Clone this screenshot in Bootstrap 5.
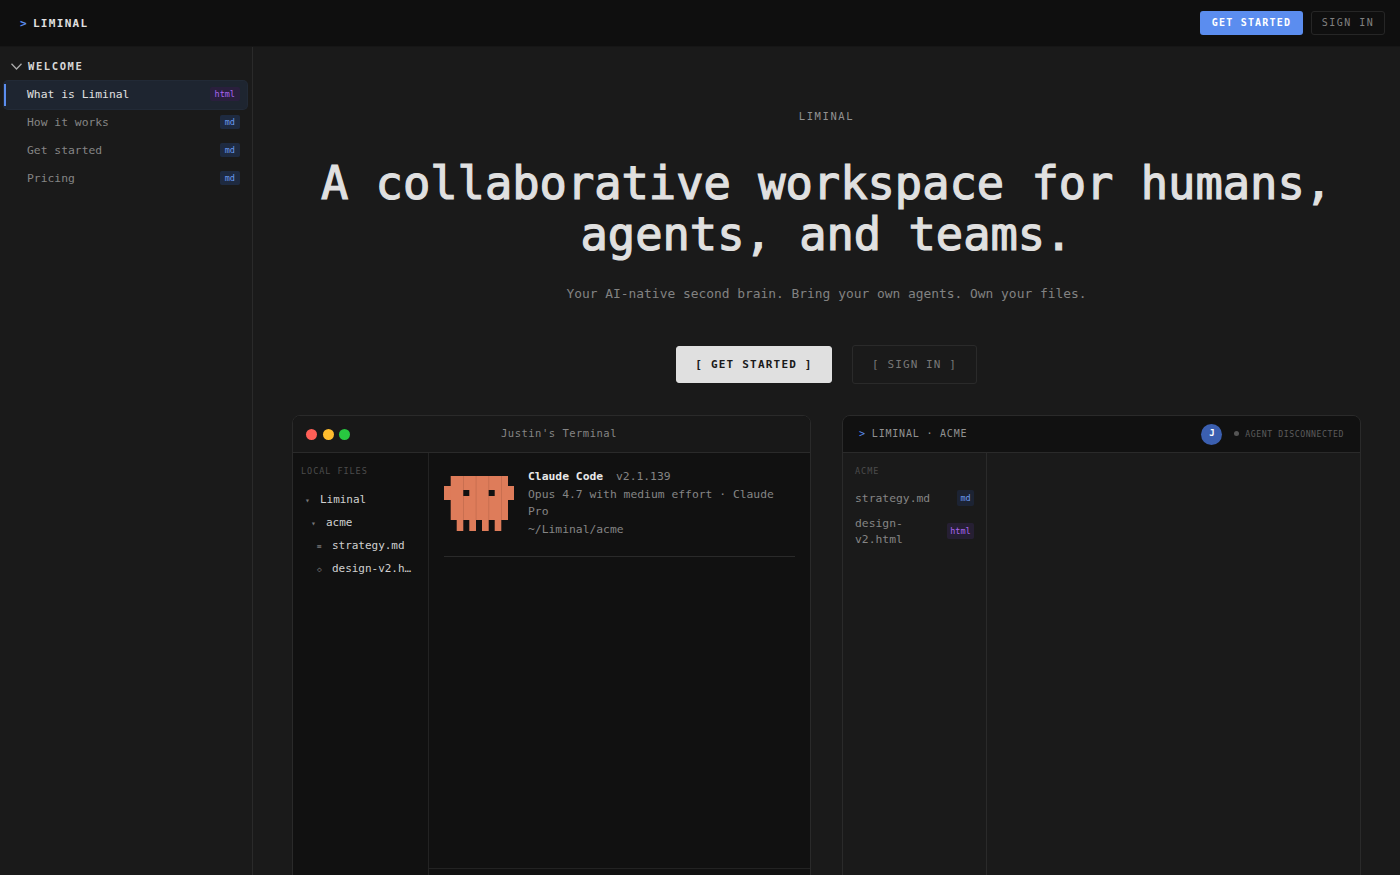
<!doctype html>
<html lang="en" data-bs-theme="dark">
<head>
<meta charset="utf-8">
<title>Liminal</title>
<link href="https://cdn.jsdelivr.net/npm/bootstrap@5.3.0/dist/css/bootstrap.min.css" rel="stylesheet">
<style>
html,body{height:875px;overflow:hidden}
body{background:#1a1a1a;color:#e0e0e0;font-family:"DejaVu Sans Mono","Liberation Mono",monospace;font-size:12px}
.topstrip{height:47px;background:#0f0f0f;padding:0 15px 0 20px;border-bottom:1px solid #161616}
.brandmark{font-size:11px;font-weight:700;letter-spacing:1.3px;color:#e0e0e0;margin-top:2px}
.brandmark .chev{margin-right:5px}
.chev{color:#5b8dee}
.top-cta{height:24px;width:103px;background:#5b8def;border:0;border-radius:3px;color:#fff;font-size:10px;font-weight:700;letter-spacing:1.2px;padding:0 0 1px}
.top-ghost{height:24px;width:74px;background:transparent;border:1px solid #262626;border-radius:3px;color:#808080;font-size:10px;letter-spacing:1.5px;padding:0 0 1px}
.shell{height:828px}
.sidecol{width:253px;flex:none;border-right:1px solid #2a2a2a;background:#1a1a1a;padding:10px 5px 0 4px}
.sec-head{height:19px;padding-left:7px;font-size:10.5px;font-weight:700;letter-spacing:1.6px;color:#d8d8d8;margin-bottom:5px;gap:6px}
.doc-row{height:28px;padding:0 7px 0 23px;font-size:11.35px;color:#858585;position:relative;border-radius:4px}
.doc-row.on{color:#e0e0e0;background:#1e2530;box-shadow:0 0 0 1px #222a36}
.doc-row.on::before{content:"";position:absolute;left:0;top:3px;bottom:3px;width:2px;background:#5b8def}
.ftag{font-size:8.5px;line-height:14px;padding:0 5px;border-radius:2px;margin-bottom:2px}
.ftag-md{background:#1e2a40;color:#6a9af0}
.ftag-html{background:#2a1f3d;color:#a865f0}
.maincol{flex:1;min-width:0;padding:0 39px}
.eyebrow{margin-top:62px;font-size:10.5px;letter-spacing:1.6px;color:#919191;line-height:14px}
.headline{margin:35px 0 0;font-size:45.4px;line-height:51px;font-weight:400;-webkit-text-stroke:1.2px #e0e0e0;color:#e0e0e0;letter-spacing:0;font-family:"DejaVu Sans Mono",monospace}
.subline{margin:24px 0 0;font-size:12.9px;line-height:20px;color:#828282}
.hero-actions{margin-top:41px;gap:20px}
.big-cta{height:37px;width:156px;background:#e0e0e0;color:#1a1a1a;border:1px solid #e0e0e0;border-radius:3px;font-size:11px;font-weight:700;letter-spacing:1.2px;padding:1px 0 0}
.big-ghost{height:39px;width:125px;background:transparent;color:#777;border:1px solid #2a2a2a;border-radius:3px;font-size:11px;letter-spacing:1.1px;padding:1px 0 0}
.win-pair{margin-top:31px;gap:31px;height:500px}
.winbox{flex:1;min-width:0;border:1px solid #2a2a2a;border-radius:8px;overflow:hidden}
.winbox.term{background:#111;flex:0 0 519px}
.winbox.appw{background:#1a1a1a}
.win-top{height:37px;border-bottom:1px solid #2a2a2a;position:relative}
.term .win-top{background:#181818;padding-left:13px;gap:5.5px}
.appw .win-top{background:#111;padding:0 16px 0 16px}
.lightdot{width:11px;height:11px;border-radius:50%}
.win-title{position:absolute;inset:0 0 0 15px;display:flex;align-items:center;justify-content:center;font-size:10.5px;color:#858585;letter-spacing:.5px}
.file-pane{width:136px;flex:none;border-right:1px solid #232323;padding:12px 0 0 8px;overflow:hidden}
.pane-label{font-size:8.5px;letter-spacing:.95px;color:#4c4c4c;line-height:12px;margin-bottom:12px}
.tree-row{height:23px;font-size:11px;color:#d0d0d0;white-space:nowrap}
.tree-ico{font-size:8px;color:#777;width:15px;flex:none}
.tree-name{min-width:0;overflow:hidden;text-overflow:ellipsis;letter-spacing:-.03px}
.term-pane{flex:1;min-width:0;position:relative;padding:15px 15px 0}
.cc-head{padding-bottom:18px;border-bottom:1px solid #2a2a2a;gap:14px}
.squid{margin-top:8px}
.cc-title{font-size:11.35px;font-weight:700;color:#e8e8e8;line-height:17.5px}
.cc-ver{font-weight:400;color:#858585;margin-left:6px}
.cc-line{font-size:11.35px;line-height:17.5px;color:#858585}
.term-foot{position:absolute;left:0;right:0;bottom:0;height:46px;border-top:1px solid #232323}
.avatar-j{width:21px;height:21px;border-radius:50%;background:#3b5fb0;color:#fff;font-size:9px;font-weight:700}
.agent-st{font-size:8.2px;letter-spacing:.55px;color:#5c5c5c;margin-left:12px}
.agent-dot{width:5px;height:5px;border-radius:50%;background:#555;margin-right:6px}
.app-brand{font-size:10px;letter-spacing:.8px;color:#919191;font-weight:500;margin-top:-1px}
.app-brand .chev{margin-right:6px}
.acme-pane{width:144px;flex:none;border-right:1px solid #2a2a2a;padding:12px 12px 0 12px}
.acme-pane .pane-label{margin-bottom:13px}
.acme-row{font-size:11.35px;line-height:16px;color:#858585}
.acme-row .ftag{padding:1px 3.3px;margin:0}
.acme-row .ftag-md{background:#1c2333}
.acme-row .ftag-html{background:#261f33}
.acme-row.first{margin-bottom:9px}
</style>
</head>
<body>
<header class="topstrip d-flex align-items-center justify-content-between">
  <div class="brandmark"><span class="chev">&gt;</span>LIMINAL</div>
  <div class="d-flex align-items-center gap-2">
    <button class="btn top-cta">GET STARTED</button>
    <button class="btn top-ghost">SIGN IN</button>
  </div>
</header>
<div class="shell d-flex">
  <aside class="sidecol">
    <div class="sec-head d-flex align-items-center">
      <svg width="11" height="7" viewBox="0 0 11 7" fill="none" stroke="#aaa" stroke-width="1.3"><path d="M.5 .8 5.5 6 10.5 .8"/></svg>
      <span>WELCOME</span>
    </div>
    <div class="doc-row on d-flex align-items-center justify-content-between"><span>What is Liminal</span><span class="ftag ftag-html">html</span></div>
    <div class="doc-row d-flex align-items-center justify-content-between"><span>How it works</span><span class="ftag ftag-md">md</span></div>
    <div class="doc-row d-flex align-items-center justify-content-between"><span>Get started</span><span class="ftag ftag-md">md</span></div>
    <div class="doc-row d-flex align-items-center justify-content-between"><span>Pricing</span><span class="ftag ftag-md">md</span></div>
  </aside>
  <main class="maincol text-center">
    <div class="eyebrow">LIMINAL</div>
    <h1 class="headline">A collaborative workspace for humans,<br>agents, and teams.</h1>
    <p class="subline">Your AI-native second brain. Bring your own agents. Own your files.</p>
    <div class="hero-actions d-flex justify-content-center align-items-center">
      <button class="btn big-cta">[ GET STARTED ]</button>
      <button class="btn big-ghost">[ SIGN IN ]</button>
    </div>
    <div class="win-pair d-flex text-start">
      <section class="winbox term d-flex flex-column">
        <div class="win-top d-flex align-items-center">
          <span class="lightdot" style="background:#ff5f57"></span>
          <span class="lightdot" style="background:#febc2e"></span>
          <span class="lightdot" style="background:#28c840"></span>
          <div class="win-title">Justin's Terminal</div>
        </div>
        <div class="d-flex flex-grow-1">
          <div class="file-pane">
            <div class="pane-label">LOCAL FILES</div>
            <div class="tree-row d-flex align-items-center ps-1"><span class="tree-ico">▾</span><span class="tree-name">Liminal</span></div>
            <div class="tree-row d-flex align-items-center" style="padding-left:10px"><span class="tree-ico">▾</span><span class="tree-name">acme</span></div>
            <div class="tree-row d-flex align-items-center" style="padding-left:16px"><span class="tree-ico">≡</span><span class="tree-name">strategy.md</span></div>
            <div class="tree-row d-flex align-items-center" style="padding-left:16px"><span class="tree-ico">◇</span><span class="tree-name" style="padding-right:14px">design-v2.html</span></div>
          </div>
          <div class="term-pane">
            <div class="cc-head d-flex">
              <svg width="70" height="55" viewBox="0 0 70 55" class="squid flex-shrink-0">
                <g fill="#de7c5a">
                  <rect x="0" y="10" width="7" height="14"/><rect x="64" y="10" width="6" height="14"/>
                  <rect x="6.7" y="0" width="57.3" height="44"/>
                  <rect x="12.7" y="44" width="6.6" height="11"/><rect x="25.3" y="44" width="6.7" height="11"/><rect x="38" y="44" width="6.7" height="11"/><rect x="50.7" y="44" width="6.6" height="11"/>
                </g>
                <g fill="#c46c4e"><rect x="19" y="0" width=".8" height="44"/><rect x="31.7" y="0" width=".8" height="44"/><rect x="44.4" y="0" width=".8" height="44"/><rect x="57" y="0" width=".8" height="44"/></g>
                <g fill="#111"><rect x="19.3" y="14" width="6" height="6"/><rect x="44.7" y="14" width="6" height="6"/></g>
              </svg>
              <div>
                <div class="cc-title">Claude Code <span class="cc-ver">v2.1.139</span></div>
                <div class="cc-line">Opus 4.7 with medium effort · Claude Pro</div>
                <div class="cc-line">~/Liminal/acme</div>
              </div>
            </div>
            <div class="term-foot"></div>
          </div>
        </div>
      </section>
      <section class="winbox appw d-flex flex-column">
        <div class="win-top d-flex align-items-center justify-content-between">
          <div class="app-brand"><span class="chev">&gt;</span>LIMINAL · ACME</div>
          <div class="d-flex align-items-center">
            <span class="avatar-j d-flex align-items-center justify-content-center">J</span>
            <span class="agent-st d-flex align-items-center"><span class="agent-dot"></span>AGENT DISCONNECTED</span>
          </div>
        </div>
        <div class="d-flex flex-grow-1">
          <div class="acme-pane">
            <div class="pane-label">ACME</div>
            <div class="acme-row first d-flex align-items-center justify-content-between"><span>strategy.md</span><span class="ftag ftag-md">md</span></div>
            <div class="acme-row d-flex align-items-center justify-content-between"><span>design-<br>v2.html</span><span class="ftag ftag-html">html</span></div>
          </div>
          <div class="flex-grow-1"></div>
        </div>
      </section>
    </div>
  </main>
</div>
</body>
</html>
